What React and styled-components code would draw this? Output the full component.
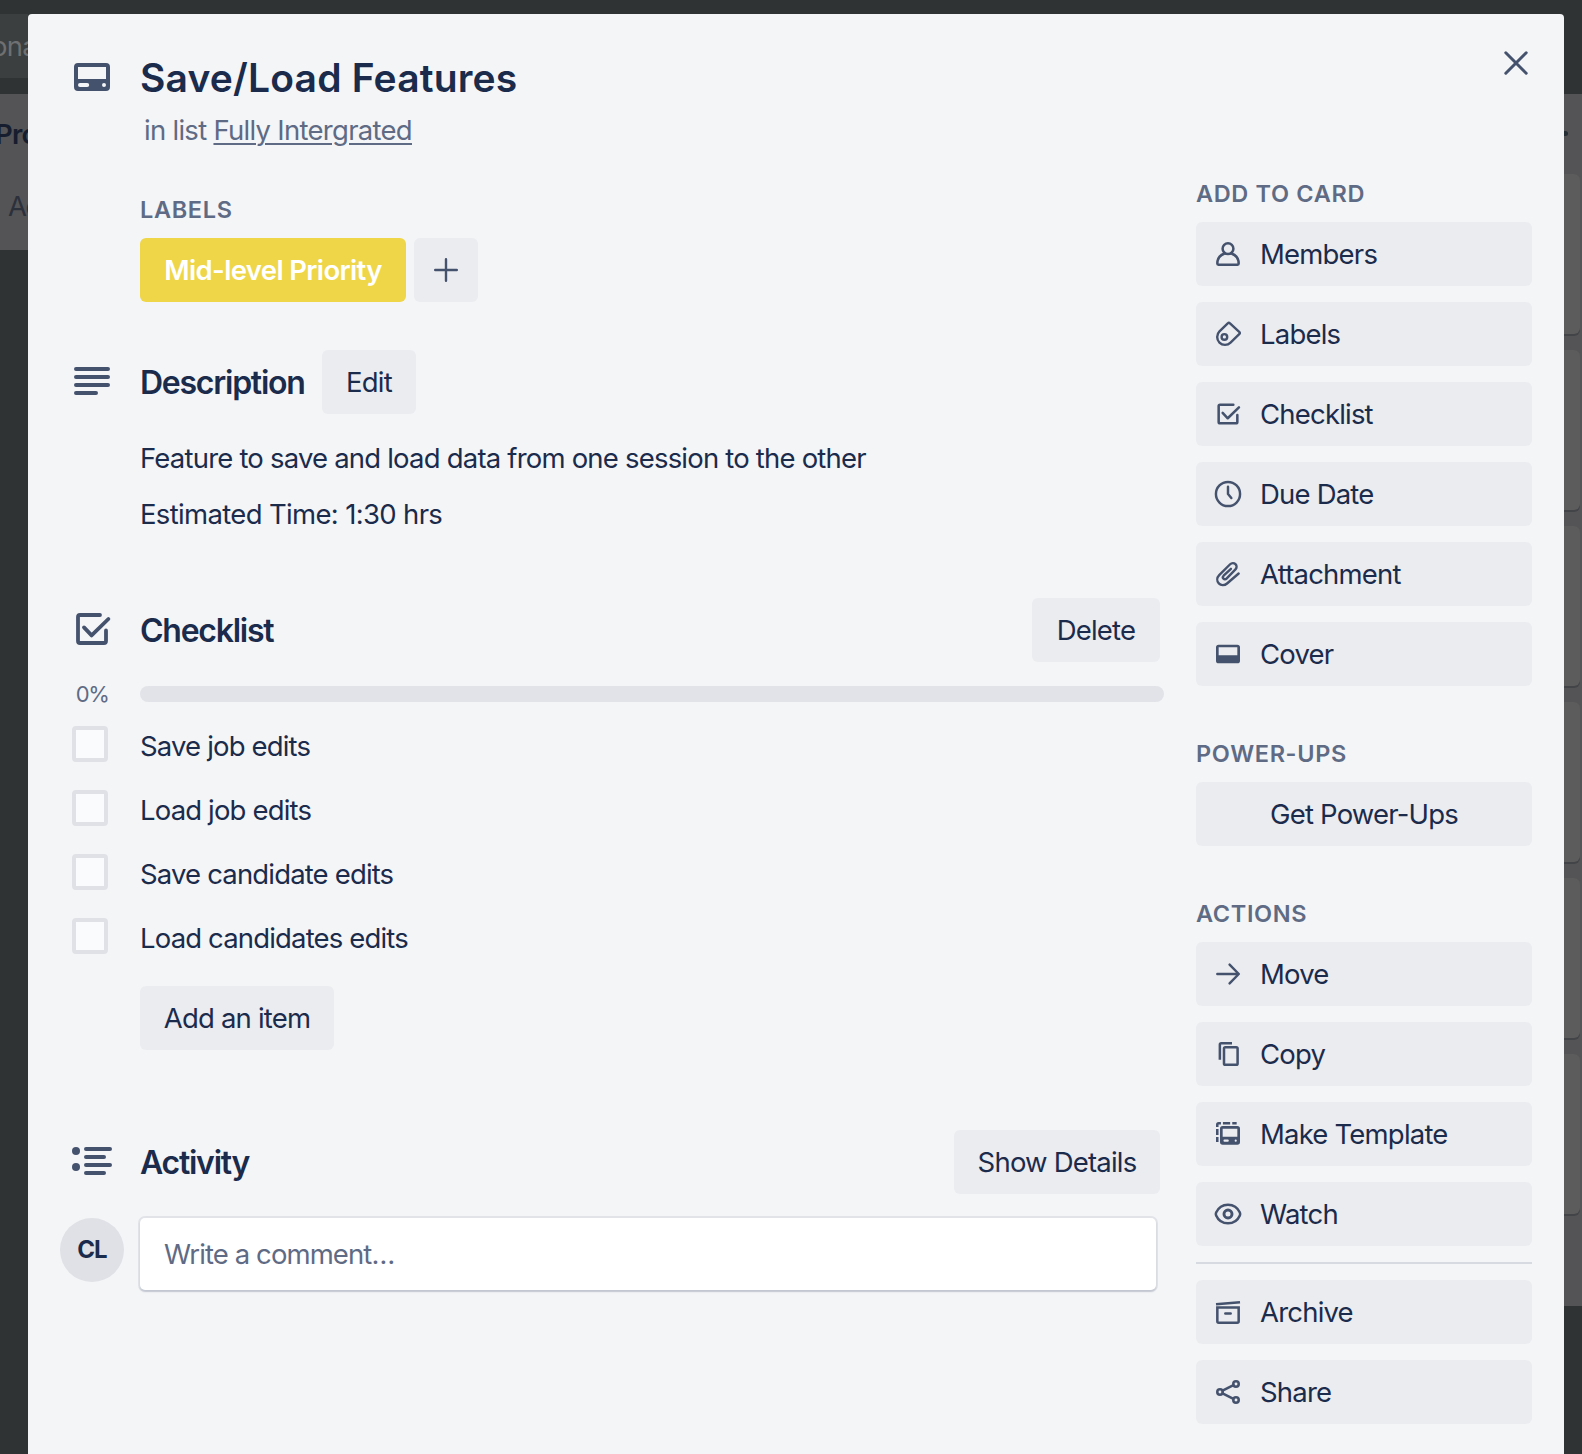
import React from 'react';
import styled, { createGlobalStyle } from 'styled-components';

const color = {
  text: '#1b2b4c',
  muted: '#5f6b84',
  icon: '#45526e',
  panel: '#f4f5f7',
  button: '#ebecef',
  line: '#dfe1e6',
};

const GlobalStyle = createGlobalStyle`
  * { box-sizing: border-box; }
  body {
    margin: 0;
    background: #2f3334;
    color: ${color.text};
    font-family: Inter, 'Liberation Sans', sans-serif;
    font-size: 27.5px;
    line-height: 40px;
    letter-spacing: -0.8px;
    overflow: hidden;
  }
  h1, h2, h3, p { margin: 0; font-weight: 400; }
  button { font: inherit; letter-spacing: inherit; color: inherit; border: 0; padding: 0; margin: 0; }
  svg { display: block; flex: none; }
`;

const Page = styled.div`
  display: grid;
  grid-template-columns: 28px 1536px 18px;
  width: 1582px;
  height: 1454px;
  overflow: hidden;
`;

/* Board behind the dialog */
const BoardEdge = styled.div`
  display: flex;
  flex-direction: column;
  padding-top: ${(p) => p.$top}px;
  overflow: hidden;
  white-space: nowrap;
`;
const BoardTab = styled.div`
  height: 64px;
  margin-bottom: 16px;
  padding-top: 12px;
  background: #3b3f40;
  color: #6e7071;
  text-indent: -9px;
`;
const ListStub = styled.div`
  height: 156px;
  padding-top: 20px;
  background: #545456;
`;
const ListName = styled.div`
  height: 40px;
  color: #151d2e;
  font-weight: 600;
  text-indent: -5px;
`;
const ListAdd = styled.div`
  margin-top: 32px;
  color: #2b303b;
  text-indent: 8px;
  letter-spacing: -1.5px;
`;
const ListEdge = styled.div`
  height: 1212px;
  display: flex;
  flex-direction: column;
  gap: 16px;
  background: #545456;
`;
const ListMenu = styled.div`
  height: 64px;
  padding-top: 37px;
  &::before {
    content: '';
    display: block;
    width: 4px;
    height: 5px;
    border-radius: 0 3px 3px 0;
    background: #262e35;
  }
`;
const BoardCard = styled.div`
  width: 16px;
  height: 160px;
  flex: none;
  background: #5c5c5c;
  border-radius: 0 6px 6px 0;
  box-shadow: 0 2px 0 #434448;
`;

/* Dialog */
const Dialog = styled.main`
  height: 1440px;
  margin-top: 14px;
  background: ${color.panel};
  border-radius: 4px 4px 0 0;
  display: grid;
  grid-template-columns: 1136px 336px;
  grid-template-rows: 160px 1fr;
  column-gap: 32px;
`;
const Header = styled.header`
  grid-column: 1 / 3;
  display: flex;
  align-items: flex-start;
  padding: 39px 0 0 40px;
`;
const HeaderText = styled.div`
  flex: 1;
  padding: 1px 0 0 24px;
`;
const Title = styled.h1`
  font-size: 39px;
  font-weight: 600;
  line-height: 48px;
  letter-spacing: 0.18px;
`;
const Subtitle = styled.p`
  margin-top: 8px;
  padding-left: 4px;
  line-height: 40px;
  letter-spacing: -0.72px;
  color: ${color.muted};
  span {
    text-decoration: underline;
    text-decoration-thickness: 2px;
    text-underline-offset: 3px;
  }
`;
const CloseButton = styled.button`
  background: none;
  margin: -14px -8px 0 0;
`;
const Main = styled.div`
  padding: 16px 0 0 40px;
`;
const Sidebar = styled.aside`
  display: flex;
  flex-direction: column;
`;
const Caption = styled.h3`
  font-size: 23.5px;
  font-weight: 580;
  line-height: 40px;
  height: 48px;
  letter-spacing: 0.65px;
  color: ${color.muted};
  padding-left: ${(p) => p.$inset || 0}px;
`;
const LabelRow = styled.div`
  display: flex;
  gap: 8px;
  padding-left: 72px;
`;
const Tag = styled.span`
  width: 266px;
  height: 64px;
  border-radius: 6px;
  background: #eed648;
  color: #fff;
  font-weight: 580;
  line-height: 65px;
  text-align: center;
  letter-spacing: -0.65px;
`;
const Button = styled.button`
  width: ${(p) => p.$w}px;
  height: 64px;
  border-radius: 6px;
  background: ${color.button};
  line-height: 40px;
  display: flex;
  align-items: center;
  justify-content: center;
`;
const SideButton = styled(Button)`
  width: 336px;
  margin-bottom: 16px;
  justify-content: ${(p) => (p.$center ? 'center' : 'flex-start')};
  padding-left: ${(p) => (p.$center ? 0 : 16)}px;
  gap: 16px;
`;
const SideGroup = styled.section`
  padding-bottom: ${(p) => p.$gap || 0}px;
`;
const Rule = styled.hr`
  width: 336px;
  height: 2px;
  margin: 0 0 16px;
  border: 0;
  background: #d7dae1;
`;
const SectionHead = styled.div`
  display: flex;
  align-items: center;
  height: 64px;
  padding-right: 4px;
  margin-top: ${(p) => p.$top}px;
  > svg { margin-bottom: 2px; }
`;
const SectionTitle = styled.h2`
  font-size: 32px;
  font-weight: 600;
  line-height: 40px;
  letter-spacing: -1.25px;
  padding: 1px 0 0 24px;
  width: ${(p) => (p.$w ? p.$w + 'px' : 'auto')};
  flex: ${(p) => (p.$w ? 'none' : 1)};
`;
const Paragraph = styled.p`
  padding-left: 72px;
  height: 40px;
  letter-spacing: ${(p) => p.$track}px;
  margin-top: ${(p) => p.$top}px;
`;
const ProgressRow = styled.div`
  display: flex;
  align-items: center;
  height: 16px;
  margin-top: 24px;
`;
const Percent = styled.span`
  width: 64px;
  margin-left: -8px;
  margin-right: 16px;
  text-align: center;
  font-size: 22px;
  line-height: 16px;
  letter-spacing: -1.4px;
  color: ${color.muted};
`;
const Track = styled.div`
  width: 1024px;
  height: 16px;
  border-radius: 8px;
  background: #e2e3e8;
`;
const Items = styled.div`
  padding-top: 16px;
`;
const Item = styled.label`
  display: flex;
  align-items: flex-start;
  height: 64px;
  padding: 8px 0 0 4px;
  gap: 32px;
`;
const Box = styled.span`
  width: 36px;
  height: 36px;
  border: 4px solid ${color.line};
  border-radius: 4px;
  background: #fafbfc;
`;
const ItemText = styled.span`
  line-height: 40px;
  letter-spacing: -0.84px;
`;
const AddItem = styled(Button)`
  margin: 12px 0 0 72px;
`;
const CommentRow = styled.div`
  display: flex;
  gap: 16px;
  padding-top: 24px;
  margin-left: -8px;
`;
const Avatar = styled.div`
  width: 64px;
  height: 64px;
  border-radius: 50%;
  background: ${color.line};
  font-size: 24px;
  font-weight: 650;
  line-height: 64px;
  text-align: center;
`;
const CommentBox = styled.div`
  width: 1016px;
  height: 72px;
  border-radius: 5px;
  background: #fff;
  box-shadow: 0 2px 2px rgba(9, 30, 66, 0.14), 0 0 0 2px #e1e3e8;
  color: ${color.muted};
  line-height: 72px;
  letter-spacing: -0.9px;
  padding-left: 24px;
`;

const Icon = ({ size = 32, w = 2, children }) => (
  <svg width={size} height={size} viewBox="0 0 24 24" fill="none" stroke={color.icon} strokeWidth={w} strokeLinecap="round" strokeLinejoin="round">
    {children}
  </svg>
);

const CardIcon = () => (
  <Icon size={48}>
    <path fill={color.icon} stroke="none" fillRule="evenodd" d="M5 5h14a2 2 0 0 1 2 2v10a2 2 0 0 1-2 2H5a2 2 0 0 1-2-2V7a2 2 0 0 1 2-2zM5 7v6h14V7zM6 15a1 1 0 0 0 0 2h3.600a1 1 0 0 0 0-2zM18 15a1 1 0 1 0 0 2 1 1 0 0 0 0-2z" />
  </Icon>
);
const CloseIcon = () => (
  <Icon size={48} w={1.5}><path d="M6.900 6.900l10.200 10.200M17.100 6.900L6.900 17.100" /></Icon>
);
const PlusIcon = () => (
  <Icon w={1.8}><path d="M12 3.900v16.200M3.900 12h16.200" /></Icon>
);
const TextIcon = () => (
  <Icon size={48}><path d="M4 6h16M4 10h16M4 14h16M4 18h10" /></Icon>
);
const CheckIcon = ({ size }) => (
  <Icon size={size} w={1.9}>
    <path d="M16 5H6a1 1 0 0 0-1 1v12a1 1 0 0 0 1 1h12a1 1 0 0 0 1-1v-5.300" />
    <path d="M8 11.200l3.800 4L20.200 7" />
  </Icon>
);
const ActivityIcon = () => (
  <Icon size={48}>
    <path d="M9 6h12M9 10h9M9 14h12M9 18h9" />
    <circle cx="4" cy="7" r="2" fill={color.icon} stroke="none" />
    <circle cx="4" cy="15" r="2" fill={color.icon} stroke="none" />
  </Icon>
);
const MemberIcon = () => (
  <Icon w={1.9}>
    <circle cx="12" cy="8" r="4.050" />
    <path d="M9.400 11.600C6.200 12.700 4 15.700 4 19.200a.8.8 0 0 0 .8.8h14.400a.8.8 0 0 0 .8-.8c0-3.500-2.200-6.500-5.400-7.600" />
  </Icon>
);
const LabelIcon = () => (
  <Icon w={1.8}>
    <path d="M5.600 10.100l6.400-6.300a.9.9 0 0 1 1.300 0l7.300 6.800a.9.9 0 0 1 0 1.300l-6.700 6.500a5.860 5.860 0 1 1-8.300-8.300z" />
    <circle cx="9.300" cy="14.200" r="2.100" />
  </Icon>
);
const ClockIcon = () => (
  <Icon w={1.85}>
    <circle cx="12" cy="12" r="9.050" />
    <path d="M12 6.500V12l2.500 3" />
  </Icon>
);
const ClipIcon = () => (
  <Icon w={1.8}>
    <path d="M20 11.600l-8.700 7.500c-1.900 1.700-4.700 1.600-6.200-.1-1.600-1.700-1.500-4.400.3-6.200l8.200-8.100c1.100-1.100 2.900-1.200 4-.1 1.100 1.100 1.100 2.900 0 4L10.900 15.400c-.7.7-1.700.7-2.300.1-.6-.6-.6-1.500.1-2.200l5.500-5.200" />
  </Icon>
);
const CoverIcon = () => (
  <Icon>
    <path fill={color.icon} stroke="none" fillRule="evenodd" d="M5 5h14a2 2 0 0 1 2 2v10a2 2 0 0 1-2 2H5a2 2 0 0 1-2-2V7a2 2 0 0 1 2-2zM5 7v6h14V7z" />
  </Icon>
);
const ArrowIcon = () => (
  <Icon w={1.85}><path d="M4 12h16M13.200 5l6.900 7-6.900 7" /></Icon>
);
const CopyIcon = () => (
  <Icon w={1.9}>
    <rect x="9" y="6.900" width="10.200" height="13.200" rx="1" />
    <path strokeLinecap="butt" d="M5.900 16.400V5a1 1 0 0 1 1-1H15" />
  </Icon>
);
const TemplateIcon = () => (
  <Icon w={1.9}>
    <path fill={color.icon} stroke="none" fillRule="evenodd" d="M8 6h11a2 2 0 0 1 2 2v10a2 2 0 0 1-2 2H8a2 2 0 0 1-2-2V8a2 2 0 0 1 2-2zM8 8v6h11V8zM9.400 16.200a.8.8 0 0 0 0 1.600h2.400a.8.8 0 0 0 0-1.600zM17.800 16.200a.8.8 0 1 0 0 1.600.8.8 0 0 0 0-1.600z" />
    <path strokeLinecap="butt" d="M3.950 6.800V5a1.050 1.050 0 0 1 1.050-1.050h1.700M8.200 3.950h5.400M15.200 3.950h3.300M3.950 8.200v4.600M3.950 14.200v3.800" />
  </Icon>
);
const EyeIcon = () => (
  <Icon w={1.9}>
    <path d="M12 5c4.600 0 7.600 3 8.900 5.900.3.700.3 1.500 0 2.200C19.600 16 16.600 19 12 19s-7.600-3-8.900-5.900a2.700 2.700 0 0 1 0-2.200C4.400 8 7.400 5 12 5z" />
    <circle cx="12" cy="12" r="3" strokeWidth="2.200" />
  </Icon>
);
const ArchiveIcon = () => (
  <Icon w={1.9}>
    <path strokeLinecap="butt" d="M3 6.200L21 4.700" />
    <path strokeLinejoin="miter" d="M4 8.700h16v10.300a1 1 0 0 1-1 1H5a1 1 0 0 1-1-1z" />
    <path d="M10 13.200h4" />
  </Icon>
);
const ShareIcon = () => (
  <Icon w={1.9}>
    <circle cx="18" cy="6" r="2.050" />
    <circle cx="6" cy="12" r="2.050" />
    <circle cx="18" cy="18" r="2.050" />
    <path d="M7.900 11l8.200-4.100M7.900 13l8.200 4.100" />
  </Icon>
);

const addActions = [
  ['Members', MemberIcon],
  ['Labels', LabelIcon],
  ['Checklist', CheckIcon],
  ['Due Date', ClockIcon],
  ['Attachment', ClipIcon],
  ['Cover', CoverIcon],
];
const cardActions = [
  ['Move', ArrowIcon],
  ['Copy', CopyIcon],
  ['Make Template', TemplateIcon],
  ['Watch', EyeIcon],
];
const endActions = [
  ['Archive', ArchiveIcon],
  ['Share', ShareIcon],
];
const items = ['Save job edits', 'Load job edits', 'Save candidate edits', 'Load candidates edits'];

const renderActions = (list) =>
  list.map(([name, Glyph]) => (
    <SideButton key={name}>
      <Glyph />
      {name}
    </SideButton>
  ));

export default function App() {
  return (
    <>
      <GlobalStyle />
      <Page>
        <BoardEdge $top={14}>
          <BoardTab>ona</BoardTab>
          <ListStub>
            <ListName>Pro</ListName>
            <ListAdd>Ad</ListAdd>
          </ListStub>
        </BoardEdge>

        <Dialog>
          <Header>
            <CardIcon />
            <HeaderText>
              <Title>Save/Load Features</Title>
              <Subtitle>in list <span>Fully Intergrated</span></Subtitle>
            </HeaderText>
            <CloseButton aria-label="Close"><CloseIcon /></CloseButton>
          </Header>

          <Main>
            <Caption $inset={72}>LABELS</Caption>
            <LabelRow>
              <Tag>Mid-level Priority</Tag>
              <Button $w={64}><PlusIcon /></Button>
            </LabelRow>

            <SectionHead $top={48}>
              <TextIcon />
              <SectionTitle $w={206}>Description</SectionTitle>
              <Button $w={94}>Edit</Button>
            </SectionHead>
            <Paragraph $top={24} $track={-0.8}>Feature to save and load data from one session to the other</Paragraph>
            <Paragraph $top={16} $track={-0.66}>Estimated Time: 1:30 hrs</Paragraph>

            <SectionHead $top={64}>
              <CheckIcon size={48} />
              <SectionTitle>Checklist</SectionTitle>
              <Button $w={128}>Delete</Button>
            </SectionHead>
            <ProgressRow>
              <Percent>0%</Percent>
              <Track />
            </ProgressRow>
            <Items>
              {items.map((name) => (
                <Item key={name}>
                  <Box />
                  <ItemText>{name}</ItemText>
                </Item>
              ))}
            </Items>
            <AddItem $w={194}>Add an item</AddItem>

            <SectionHead $top={80}>
              <ActivityIcon />
              <SectionTitle>Activity</SectionTitle>
              <Button $w={206}>Show Details</Button>
            </SectionHead>
            <CommentRow>
              <Avatar>CL</Avatar>
              <CommentBox>Write a comment…</CommentBox>
            </CommentRow>
          </Main>

          <Sidebar>
            <SideGroup $gap={32}>
              <Caption>ADD TO CARD</Caption>
              {renderActions(addActions)}
            </SideGroup>
            <SideGroup $gap={32}>
              <Caption>POWER-UPS</Caption>
              <SideButton $center>Get Power-Ups</SideButton>
            </SideGroup>
            <SideGroup>
              <Caption>ACTIONS</Caption>
              {renderActions(cardActions)}
              <Rule />
              {renderActions(endActions)}
            </SideGroup>
          </Sidebar>
        </Dialog>

        <BoardEdge $top={94}>
          <ListEdge>
            <ListMenu />
            {[1, 2, 3, 4, 5, 6].map((n) => (
              <BoardCard key={n} />
            ))}
          </ListEdge>
        </BoardEdge>
      </Page>
    </>
  );
}
